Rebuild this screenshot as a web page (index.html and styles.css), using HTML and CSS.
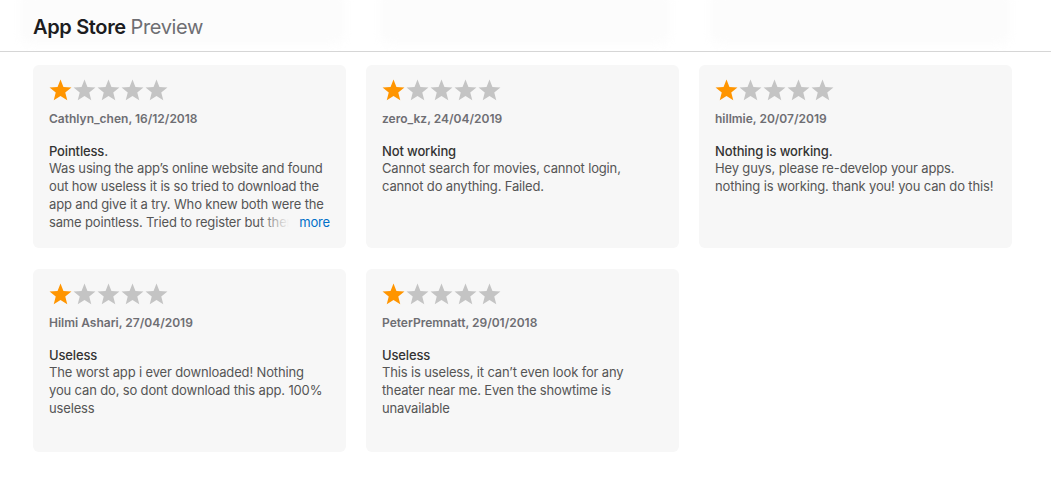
FILE: index.html
```html
<!DOCTYPE html>
<html lang="en">
<head>
    <meta charset="UTF-8">
    <meta name="viewport" content="width=device-width, initial-scale=1.0">
    <link rel="stylesheet" href="styles.css">
    <title>App Store Preview</title>
</head>
<body>
    <header class="top-bar">
        <div class="ghost g1"></div>
        <div class="ghost g2"></div>
        <div class="ghost g3"></div>
        <h1><span class="brand">App Store</span> <span class="sub">Preview</span></h1>
    </header>

    <main class="reviews">
        <div class="review-card">
            <div class="stars">
                <svg class="star on" viewBox="0 0 23 22"><polygon points="11.5,0.5 14.44,7.96 22.44,8.45 16.26,13.55 18.26,21.3 11.5,17 4.74,21.3 6.74,13.55 0.56,8.45 8.56,7.96"/></svg>
                <svg class="star" viewBox="0 0 23 22"><polygon points="11.5,0.5 14.44,7.96 22.44,8.45 16.26,13.55 18.26,21.3 11.5,17 4.74,21.3 6.74,13.55 0.56,8.45 8.56,7.96"/></svg>
                <svg class="star" viewBox="0 0 23 22"><polygon points="11.5,0.5 14.44,7.96 22.44,8.45 16.26,13.55 18.26,21.3 11.5,17 4.74,21.3 6.74,13.55 0.56,8.45 8.56,7.96"/></svg>
                <svg class="star" viewBox="0 0 23 22"><polygon points="11.5,0.5 14.44,7.96 22.44,8.45 16.26,13.55 18.26,21.3 11.5,17 4.74,21.3 6.74,13.55 0.56,8.45 8.56,7.96"/></svg>
                <svg class="star" viewBox="0 0 23 22"><polygon points="11.5,0.5 14.44,7.96 22.44,8.45 16.26,13.55 18.26,21.3 11.5,17 4.74,21.3 6.74,13.55 0.56,8.45 8.56,7.96"/></svg>
            </div>
            <p class="author">Cathlyn_chen, 16/12/2018</p>
            <h3>Pointless.</h3>
            <div class="body clipped">
                <p>Was using the app’s online website and found out how useless it is so tried to download the app and give it a try. Who knew both were the same pointless. Tried to register but then it failed</p>
                <a class="more" href="#">more</a>
            </div>
        </div>
        <div class="review-card">
            <div class="stars">
                <svg class="star on" viewBox="0 0 23 22"><polygon points="11.5,0.5 14.44,7.96 22.44,8.45 16.26,13.55 18.26,21.3 11.5,17 4.74,21.3 6.74,13.55 0.56,8.45 8.56,7.96"/></svg>
                <svg class="star" viewBox="0 0 23 22"><polygon points="11.5,0.5 14.44,7.96 22.44,8.45 16.26,13.55 18.26,21.3 11.5,17 4.74,21.3 6.74,13.55 0.56,8.45 8.56,7.96"/></svg>
                <svg class="star" viewBox="0 0 23 22"><polygon points="11.5,0.5 14.44,7.96 22.44,8.45 16.26,13.55 18.26,21.3 11.5,17 4.74,21.3 6.74,13.55 0.56,8.45 8.56,7.96"/></svg>
                <svg class="star" viewBox="0 0 23 22"><polygon points="11.5,0.5 14.44,7.96 22.44,8.45 16.26,13.55 18.26,21.3 11.5,17 4.74,21.3 6.74,13.55 0.56,8.45 8.56,7.96"/></svg>
                <svg class="star" viewBox="0 0 23 22"><polygon points="11.5,0.5 14.44,7.96 22.44,8.45 16.26,13.55 18.26,21.3 11.5,17 4.74,21.3 6.74,13.55 0.56,8.45 8.56,7.96"/></svg>
            </div>
            <p class="author">zero_kz, 24/04/2019</p>
            <h3>Not working</h3>
            <div class="body">
                <p>Cannot search for movies, cannot login, cannot do anything. Failed.</p>
            </div>
        </div>
        <div class="review-card">
            <div class="stars">
                <svg class="star on" viewBox="0 0 23 22"><polygon points="11.5,0.5 14.44,7.96 22.44,8.45 16.26,13.55 18.26,21.3 11.5,17 4.74,21.3 6.74,13.55 0.56,8.45 8.56,7.96"/></svg>
                <svg class="star" viewBox="0 0 23 22"><polygon points="11.5,0.5 14.44,7.96 22.44,8.45 16.26,13.55 18.26,21.3 11.5,17 4.74,21.3 6.74,13.55 0.56,8.45 8.56,7.96"/></svg>
                <svg class="star" viewBox="0 0 23 22"><polygon points="11.5,0.5 14.44,7.96 22.44,8.45 16.26,13.55 18.26,21.3 11.5,17 4.74,21.3 6.74,13.55 0.56,8.45 8.56,7.96"/></svg>
                <svg class="star" viewBox="0 0 23 22"><polygon points="11.5,0.5 14.44,7.96 22.44,8.45 16.26,13.55 18.26,21.3 11.5,17 4.74,21.3 6.74,13.55 0.56,8.45 8.56,7.96"/></svg>
                <svg class="star" viewBox="0 0 23 22"><polygon points="11.5,0.5 14.44,7.96 22.44,8.45 16.26,13.55 18.26,21.3 11.5,17 4.74,21.3 6.74,13.55 0.56,8.45 8.56,7.96"/></svg>
            </div>
            <p class="author">hillmie, 20/07/2019</p>
            <h3>Nothing is working.</h3>
            <div class="body">
                <p>Hey guys, please re-develop your apps. nothing is working. thank you! you can do this!</p>
            </div>
        </div>
        <div class="review-card">
            <div class="stars">
                <svg class="star on" viewBox="0 0 23 22"><polygon points="11.5,0.5 14.44,7.96 22.44,8.45 16.26,13.55 18.26,21.3 11.5,17 4.74,21.3 6.74,13.55 0.56,8.45 8.56,7.96"/></svg>
                <svg class="star" viewBox="0 0 23 22"><polygon points="11.5,0.5 14.44,7.96 22.44,8.45 16.26,13.55 18.26,21.3 11.5,17 4.74,21.3 6.74,13.55 0.56,8.45 8.56,7.96"/></svg>
                <svg class="star" viewBox="0 0 23 22"><polygon points="11.5,0.5 14.44,7.96 22.44,8.45 16.26,13.55 18.26,21.3 11.5,17 4.74,21.3 6.74,13.55 0.56,8.45 8.56,7.96"/></svg>
                <svg class="star" viewBox="0 0 23 22"><polygon points="11.5,0.5 14.44,7.96 22.44,8.45 16.26,13.55 18.26,21.3 11.5,17 4.74,21.3 6.74,13.55 0.56,8.45 8.56,7.96"/></svg>
                <svg class="star" viewBox="0 0 23 22"><polygon points="11.5,0.5 14.44,7.96 22.44,8.45 16.26,13.55 18.26,21.3 11.5,17 4.74,21.3 6.74,13.55 0.56,8.45 8.56,7.96"/></svg>
            </div>
            <p class="author">Hilmi Ashari, 27/04/2019</p>
            <h3>Useless</h3>
            <div class="body">
                <p>The worst app i ever downloaded! Nothing you can do, so dont download this app. 100% useless</p>
            </div>
        </div>
        <div class="review-card">
            <div class="stars">
                <svg class="star on" viewBox="0 0 23 22"><polygon points="11.5,0.5 14.44,7.96 22.44,8.45 16.26,13.55 18.26,21.3 11.5,17 4.74,21.3 6.74,13.55 0.56,8.45 8.56,7.96"/></svg>
                <svg class="star" viewBox="0 0 23 22"><polygon points="11.5,0.5 14.44,7.96 22.44,8.45 16.26,13.55 18.26,21.3 11.5,17 4.74,21.3 6.74,13.55 0.56,8.45 8.56,7.96"/></svg>
                <svg class="star" viewBox="0 0 23 22"><polygon points="11.5,0.5 14.44,7.96 22.44,8.45 16.26,13.55 18.26,21.3 11.5,17 4.74,21.3 6.74,13.55 0.56,8.45 8.56,7.96"/></svg>
                <svg class="star" viewBox="0 0 23 22"><polygon points="11.5,0.5 14.44,7.96 22.44,8.45 16.26,13.55 18.26,21.3 11.5,17 4.74,21.3 6.74,13.55 0.56,8.45 8.56,7.96"/></svg>
                <svg class="star" viewBox="0 0 23 22"><polygon points="11.5,0.5 14.44,7.96 22.44,8.45 16.26,13.55 18.26,21.3 11.5,17 4.74,21.3 6.74,13.55 0.56,8.45 8.56,7.96"/></svg>
            </div>
            <p class="author">PeterPremnatt, 29/01/2018</p>
            <h3>Useless</h3>
            <div class="body">
                <p>This is useless, it can’t even look for any theater near me. Even the showtime is unavailable</p>
            </div>
        </div>
    </main>
</body>
</html>
```

FILE: styles.css
```css
body {
  margin: 0;
  background: #fff;
  font-family: Inter, "Liberation Sans", sans-serif;
  color: #333;
}

/* header with the faint blurred content showing through */
.top-bar {
  position: relative;
  height: 52px;
  border-bottom: 1px solid #d6d6d6;
  padding: 3px 0 0 33px;
  display: flex;
  align-items: center;
  box-sizing: border-box;
  overflow: hidden;
}

.ghost {
  position: absolute;
  top: -10px;
  height: 55px;
  background: #fcfcfc;
  border-radius: 10px;
  filter: blur(4px);
}
.g1 { left: 20px; width: 325px; }
.g2 { left: 380px; width: 290px; }
.g3 { left: 710px; width: 300px; }

.top-bar h1 {
  position: relative;
  margin: 0;
  font-size: 20px;
  font-weight: 600;
  letter-spacing: -0.35px;
  color: #1d1d1f;
}

.top-bar .sub {
  font-weight: 400;
  color: #6e6e73;
}

.reviews {
  display: grid;
  grid-template-columns: repeat(3, 313px);
  column-gap: 20px;
  row-gap: 21px;
  padding: 13px 0 0 33px;
}

.review-card {
  background: #f7f7f7;
  border-radius: 6px;
  height: 183px;
  box-sizing: border-box;
  padding: 14px 18px 0 16px;
  font-size: 13px;
  letter-spacing: -0.15px;
}

.stars {
  display: flex;
  gap: 1px;
  height: 22px;
}

.star {
  width: 23px;
  height: 22px;
  fill: #c4c4c4;
}

.star.on {
  fill: #ff9500;
}

.author {
  margin: 10px 0 0 0;
  font-size: 12px;
  font-weight: 600;
  color: #6e6e73;
  letter-spacing: 0;
}

.review-card h3 {
  margin: 17px 0 0 0;
  font-size: 13px;
  font-weight: 500;
  color: #333;
}

.body {
  position: relative;
  color: #555;
  line-height: 18px;
}

.body p {
  margin: 0;
}

.clipped {
  height: 72px;
  overflow: hidden;
  margin-right: -2px;
}

.more {
  position: absolute;
  right: 0;
  bottom: 0;
  color: #0070c9;
  text-decoration: none;
  padding-left: 40px;
  background: linear-gradient(to right, rgba(247,247,247,0), #f7f7f7 30px);
}
```
